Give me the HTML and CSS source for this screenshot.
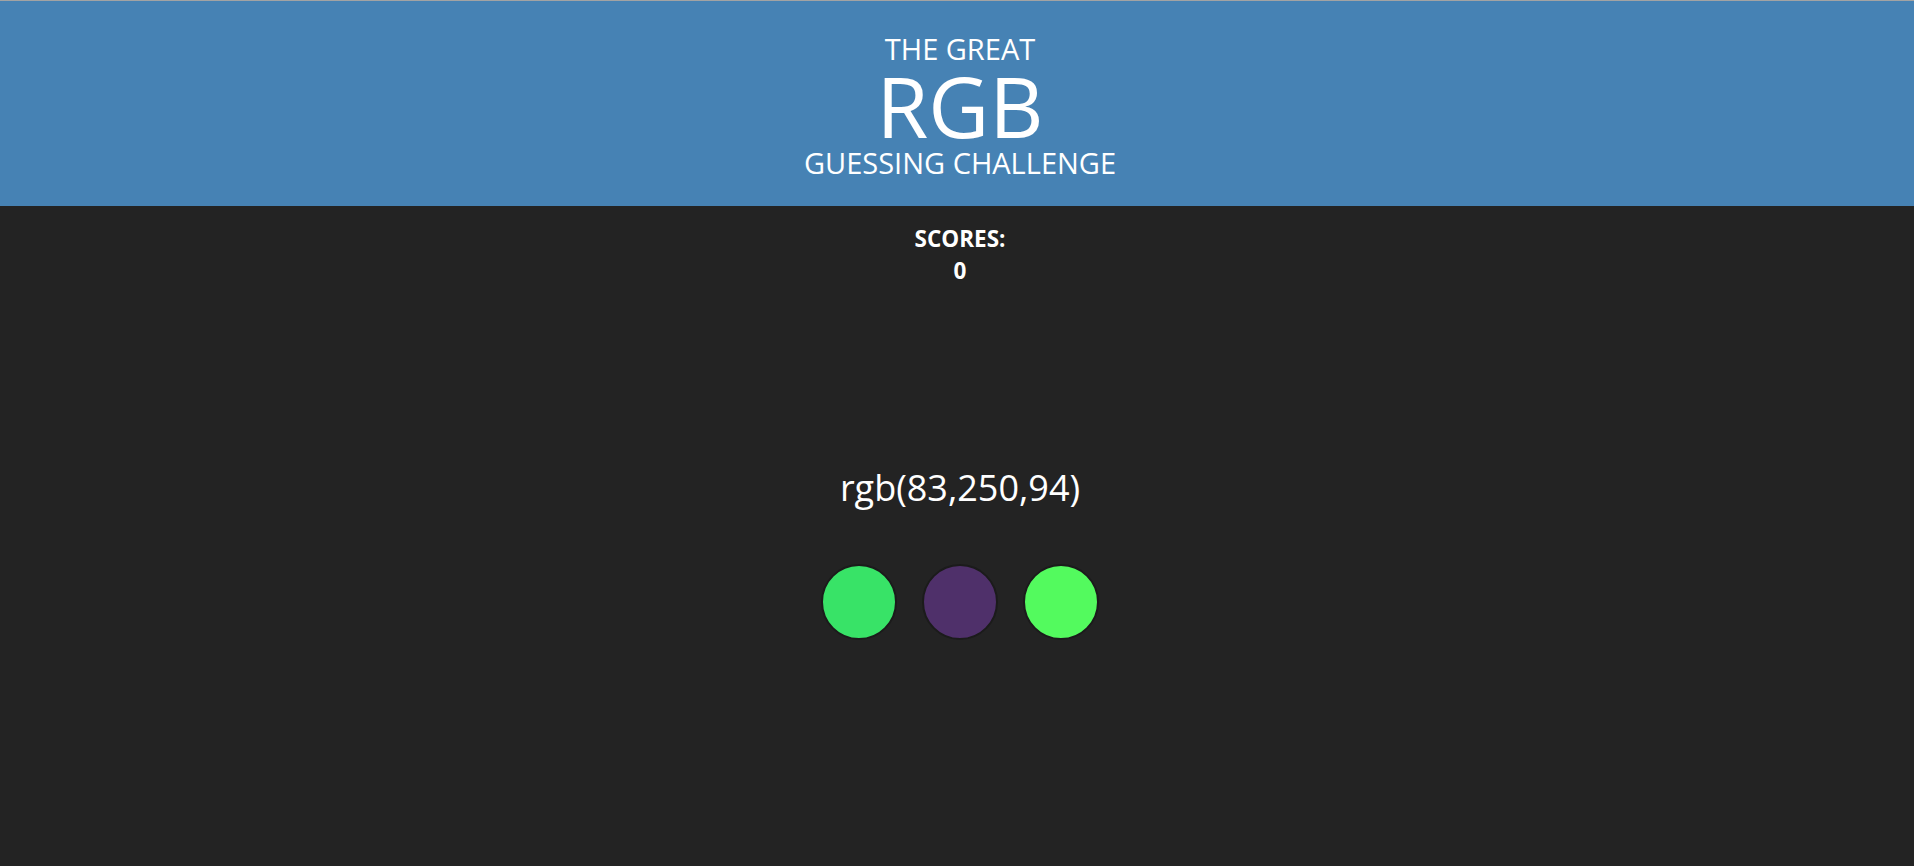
FILE: index.html
```html
<!DOCTYPE html>
<html>
<head>
<meta charset="utf-8">
<link rel="stylesheet" href="styles.css">
</head>
<body>
<header class="hero">
  <div class="hero-small">THE GREAT</div>
  <div class="hero-big">RGB</div>
  <div class="hero-small">GUESSING CHALLENGE</div>
</header>
<main class="game">
  <div class="scores">
    <div>SCORES:</div>
    <div>0</div>
  </div>
  <div class="target">rgb(83,250,94)</div>
  <div class="choices">
    <div class="ball ball-a"></div>
    <div class="ball ball-b"></div>
    <div class="ball ball-c"></div>
  </div>
</main>
</body>
</html>
```
FILE: styles.css
```css
html, body {
  margin: 0;
  padding: 0;
  height: 100%;
}
body {
  background: #232323;
  color: #ffffff;
  font-family: "Open Sans", "Noto Sans", sans-serif;
  border-top: 1px solid #a3a3a3;
  box-sizing: border-box;
}
.hero {
  background: #4682b4;
  height: 205px;
  display: flex;
  flex-direction: column;
  align-items: center;
  padding-left: 6px;
  padding-top: 30px;
  box-sizing: border-box;
}
.hero-small {
  font-size: 29px;
  line-height: 36px;
}
.hero-big {
  font-size: 84px;
  line-height: 78px;
}
.game {
  display: flex;
  flex-direction: column;
  align-items: center;
  padding-left: 6px;
}
.scores {
  margin-top: 17px;
  font-weight: bold;
  font-size: 22.5px;
  line-height: 32px;
  text-align: center;
}
.target {
  margin-top: 179px;
  font-size: 36px;
  line-height: 44px;
}
.choices {
  display: flex;
  gap: 25px;
  margin-top: 54px;
}
.ball {
  width: 72px;
  height: 72px;
  border-radius: 50%;
  border: 2px solid #1b1b1b;
}
.ball-a { background: #38e367; }
.ball-b { background: #4f306a; }
.ball-c { background: #53fa5e; }
```
